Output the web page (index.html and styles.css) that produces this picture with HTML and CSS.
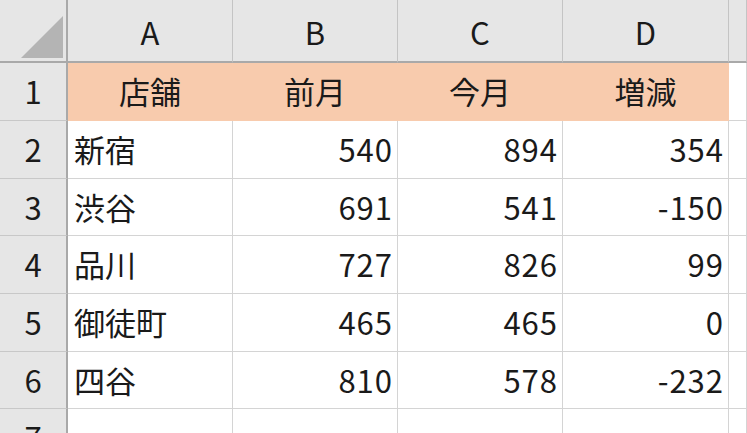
FILE: index.html
```html
<!DOCTYPE html>
<html lang="ja">
<head>
<meta charset="utf-8">
<link rel="stylesheet" href="styles.css">
</head>
<body>
<div class="sheet">
  <div class="corner"><svg class="tri" width="44" height="44" viewBox="0 0 44 44"><polygon points="44,0 44,42 2,42" fill="#b4b4b4"/></svg></div>
  <div class="ch">A</div><div class="ch">B</div><div class="ch">C</div><div class="ch">D</div><div class="ch"></div>

  <div class="rh">1</div>
  <div class="c hd">店舗</div><div class="c hd">前月</div><div class="c hd">今月</div><div class="c hd">増減</div><div class="c"></div>

  <div class="rh">2</div>
  <div class="c t">新宿</div><div class="c n">540</div><div class="c n">894</div><div class="c n">354</div><div class="c"></div>

  <div class="rh">3</div>
  <div class="c t">渋谷</div><div class="c n">691</div><div class="c n">541</div><div class="c n">-150</div><div class="c"></div>

  <div class="rh">4</div>
  <div class="c t">品川</div><div class="c n">727</div><div class="c n">826</div><div class="c n">99</div><div class="c"></div>

  <div class="rh">5</div>
  <div class="c t">御徒町</div><div class="c n">465</div><div class="c n">465</div><div class="c n">0</div><div class="c"></div>

  <div class="rh">6</div>
  <div class="c t">四谷</div><div class="c n">810</div><div class="c n">578</div><div class="c n">-232</div><div class="c"></div>

  <div class="rh">7</div>
  <div class="c"></div><div class="c"></div><div class="c"></div><div class="c"></div><div class="c"></div>
</div>
</body>
</html>
```
FILE: styles.css
```css
html, body {
  margin: 0;
  padding: 0;
  background: #ffffff;
  overflow: hidden;
}
.sheet {
  width: 747px;
  height: 433px;
  overflow: hidden;
  display: grid;
  grid-template-columns: 68px 165px 165px 165px 166px 1fr;
  grid-template-rows: 63px 58px 58px 57px 58px 58px 57px 58px;
  font-family: "Noto Sans CJK JP", "Noto Sans", sans-serif;
  font-size: 31px;
  font-weight: 400;
  color: #1a1a1a;
}
.sheet > div {
  box-sizing: border-box;
  display: flex;
  align-items: center;
  overflow: hidden;
  white-space: nowrap;
}
.corner {
  background: #e6e6e6;
  border-right: 2px solid #a9a9a9;
  border-bottom: 2px solid #a9a9a9;
  align-items: flex-start !important;
  justify-content: flex-start;
}
.tri {
  margin: 16px 0 0 19px;
}
.ch {
  background: #e6e6e6;
  border-right: 1px solid #c4c4c4;
  border-bottom: 2px solid #a9a9a9;
  justify-content: center;
  padding-top: 2px;
}
.rh {
  background: #e6e6e6;
  border-right: 2px solid #a9a9a9;
  border-bottom: 1px solid #c8c8c8;
  justify-content: center;
  padding-bottom: 2px;
}
.c {
  border-right: 1px solid #d4d4d4;
  border-bottom: 1px solid #d4d4d4;
  padding-bottom: 2px;
}
.hd {
  background: #f8cbad;
  border-color: #f8cbad;
  justify-content: center;
}
.t {
  justify-content: flex-start;
  padding-left: 6px;
}
.n {
  justify-content: flex-end;
  padding-right: 4px;
  letter-spacing: 1px;
}
```
